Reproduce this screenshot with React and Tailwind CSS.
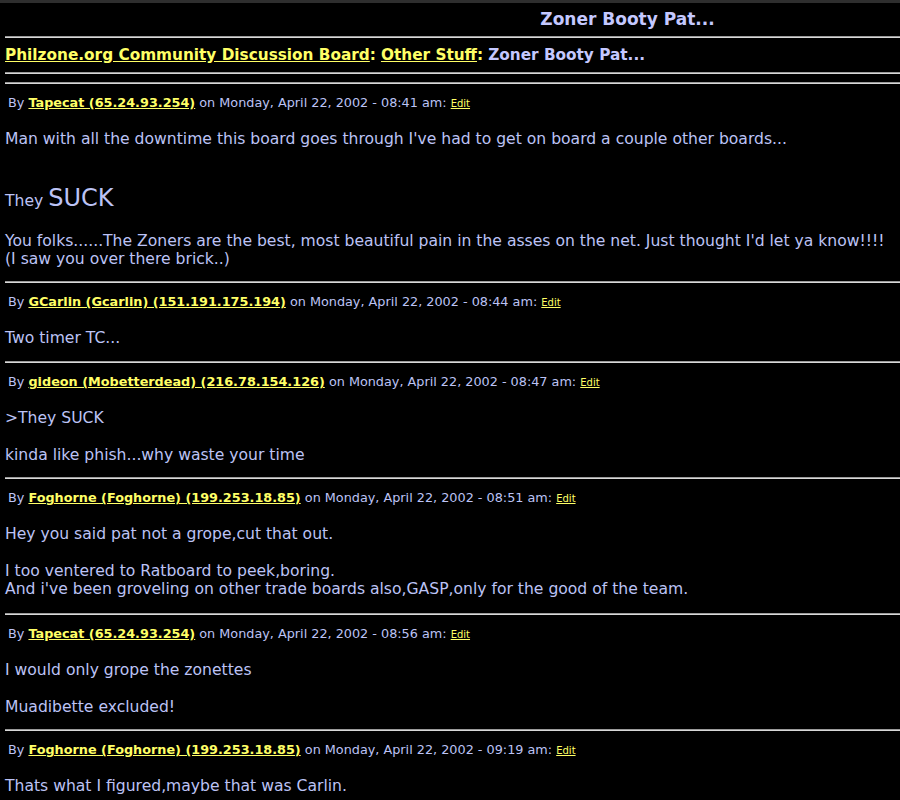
import React from 'react';

const posts = [
  {
    name: "Tapecat (65.24.93.254)",
    time: "08:41 am",
    body: (
      <>
        <p className="leading-[18px]">Man with all the downtime this board goes through I've had to get on board a couple other boards...</p>
        <p className="mt-[36px] leading-[28px]">They <span className="text-[24px]">SUCK</span></p>
        <p className="mt-[18px] leading-[17.5px]">You folks......The Zoners are the best, most beautiful pain in the asses on the net. Just thought I'd let ya know!!!!<br />(I saw you over there brick..)</p>
      </>
    ),
  },
  {
    name: "GCarlin (Gcarlin) (151.191.175.194)",
    time: "08:44 am",
    body: <p className="leading-[18px] pb-[1px]">Two timer TC...</p>,
  },
  {
    name: "gideon (Mobetterdead) (216.78.154.126)",
    time: "08:47 am",
    body: (
      <>
        <p className="leading-[18px]">&gt;They SUCK</p>
        <p className="mt-[19px] leading-[18px]">kinda like phish...why waste your time</p>
      </>
    ),
  },
  {
    name: "Foghorne (Foghorne) (199.253.18.85)",
    time: "08:51 am",
    body: (
      <>
        <p className="leading-[18px]">Hey you said pat not a grope,cut that out.</p>
        <p className="mt-[19px] leading-[18px] pb-[2px]">I too ventered to Ratboard to peek,boring.<br />And i've been groveling on other trade boards also,GASP,only for the good of the team.</p>
      </>
    ),
  },
  {
    name: "Tapecat (65.24.93.254)",
    time: "08:56 am",
    body: (
      <>
        <p className="leading-[18px]">I would only grope the zonettes</p>
        <p className="mt-[19px] leading-[18px]">Muadibette excluded!</p>
      </>
    ),
  },
  {
    name: "Foghorne (Foghorne) (199.253.18.85)",
    time: "09:19 am",
    body: <p className="leading-[18px]">Thats what I figured,maybe that was Carlin.</p>,
  },
];

function Rule() {
  return <div className="h-[2px] border-t border-[#9a9a9a] bg-[#d8d8d8]" />;
}

function Post({ post, first }) {
  return (
    <div>
      {!first && <Rule />}
      <div className="mt-[12px] pl-[3px] text-[12.8px] leading-[14px]">
        By{' '}
        <a href="#" className="font-bold text-[#ffff66] underline">{post.name}</a>
        {' '}on Monday, April 22, 2002 - {post.time}:{' '}
        <a href="#" className="text-[10px] text-[#ffff66] underline">Edit</a>
      </div>
      <div className="mt-[19px] mb-[13px] text-[15.6px]">{post.body}</div>
    </div>
  );
}

export default function App() {
  return (
    <div
      className="min-h-screen bg-black text-[#bcc3f5]"
      style={{ fontFamily: '"DejaVu Sans", Verdana, sans-serif' }}
    >
      <div className="h-[3px] bg-[#2e2e2e]" />
      <div className="pl-[5px]">
        <div className="grid grid-cols-[350px_1fr] h-[33px] items-center">
          <div />
          <h1 className="text-center text-[17px] font-bold text-[#c4c8ff]">Zoner Booty Pat...</h1>
        </div>
        <Rule />
        <div className="h-[34px] flex items-center text-[15.3px] font-bold">
          <a href="#" className="text-[#ffff66] underline">Philzone.org Community Discussion Board</a>
          <span className="text-[#ffff66]">:</span>
          <a href="#" className="ml-[5px] text-[#ffff66] underline">Other Stuff</a>
          <span className="text-[#ffff66]">:</span>
          <span className="ml-[5px] text-[#c4c8ff]">Zoner Booty Pat...</span>
        </div>
        <Rule />
        <div className="h-[8px]" />
        <Rule />
        {posts.map((p, i) => (
          <Post key={i} post={p} first={i === 0} />
        ))}
      </div>
    </div>
  );
}
